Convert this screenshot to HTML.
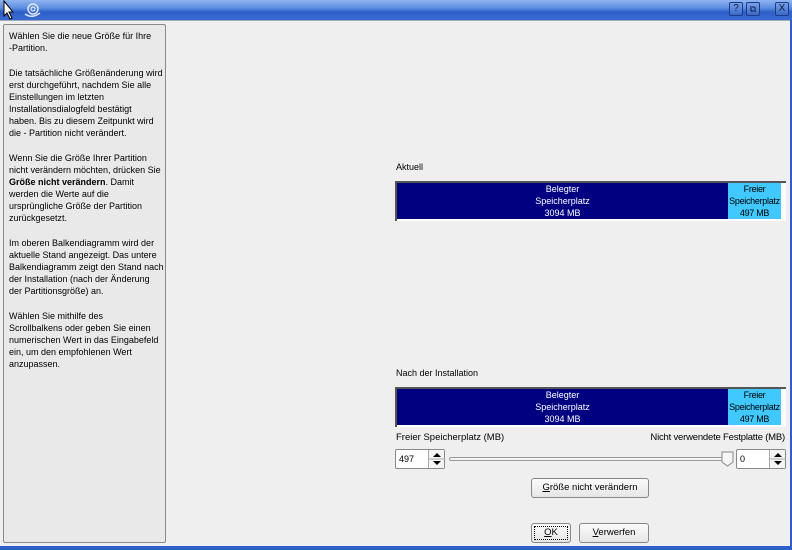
<!DOCTYPE html>
<html><head><meta charset="utf-8"><style>
*{margin:0;padding:0;box-sizing:border-box}
body{width:792px;height:550px;background:#efefef;font-family:"Liberation Sans","DejaVu Sans",sans-serif;font-size:9px;color:#000;position:relative;overflow:hidden;white-space:nowrap}
.title{position:absolute;left:0;top:0;width:792px;height:20px;background:linear-gradient(#8fb4f0 0%,#5b8de0 40%,#2e5fc8 60%,#3a6ad0 100%)}
.tb{position:absolute;top:2px;width:14px;height:14px;border:1px solid #1c3c8a;border-radius:2px;background:linear-gradient(#7aa2e8,#3a68c8);color:#0c1a40;font-size:10px;text-align:center;line-height:12px}
.abs{position:absolute}
.left{position:absolute;left:3px;top:24px;width:163px;height:519px;border:1px solid #8a8a8a;border-radius:2px;background:#e9e9e9;padding:5px 0 0 5px;line-height:12.1px}
.left p{margin-bottom:12.5px}
.bar{position:absolute;left:395px;width:391px;height:40px;border-top:2px solid #555;border-left:2px solid #555;background:#fff}
.dk{position:absolute;left:0;top:0;width:331px;height:36px;background:#000080;color:#fff;text-align:center;line-height:12px;padding-top:0}
.cy{position:absolute;left:331px;top:0;width:53px;height:36px;background:#40c8ff;color:#000;text-align:center;line-height:12px;letter-spacing:-0.3px}
.spin{position:absolute;top:449px;height:20px;border:1px solid #888;border-radius:2px;background:#fff}
.btn{position:absolute;border:1px solid #888;border-radius:3px;background:linear-gradient(#fafafa,#e6e6e6);text-align:center;font-size:9.5px}
.arr{position:absolute;right:0;top:0;width:16px;height:18px;border-left:1px solid #aaa;background:#f4f4f4}
</style></head><body>
<div class="title">
<svg class="abs" style="left:2px;top:0" width="14" height="20"><path d="M2 1 L2 16 L5 13 L8 19 L10 18 L7 12 L11 12 Z" fill="#fff" stroke="#000" stroke-width="1"/></svg>
<svg class="abs" style="left:22px;top:2px" width="20" height="18"><circle cx="11" cy="7" r="5" fill="none" stroke="#dde6f5" stroke-width="1.5"/><circle cx="11" cy="7" r="2" fill="none" stroke="#dde6f5" stroke-width="1.2"/><path d="M3 12 Q10 17 18 11" fill="none" stroke="#dde6f5" stroke-width="1.5"/></svg>
<div class="tb" style="left:729px">?</div>
<div class="tb" style="left:746px;font-size:9px">⧉</div>
<div class="tb" style="left:775px">X</div>
</div>
<div class="abs" style="left:0;top:20px;width:792px;height:1px;background:#9ab"></div>
<div class="left">
<p>Wählen Sie die neue Größe für Ihre<br>-Partition.</p>
<p>Die tatsächliche Größenänderung wird<br>erst durchgeführt, nachdem Sie alle<br>Einstellungen im letzten<br>Installationsdialogfeld bestätigt<br>haben. Bis zu diesem Zeitpunkt wird<br>die - Partition nicht verändert.</p>
<p>Wenn Sie die Größe Ihrer Partition<br>nicht verändern möchten, drücken Sie<br><b>Größe nicht verändern</b>. Damit<br>werden die Werte auf die<br>ursprüngliche Größe der Partition<br>zurückgesetzt.</p>
<p>Im oberen Balkendiagramm wird der<br>aktuelle Stand angezeigt. Das untere<br>Balkendiagramm zeigt den Stand nach<br>der Installation (nach der Änderung<br>der Partitionsgröße) an.</p>
<p>Wählen Sie mithilfe des<br>Scrollbalkens oder geben Sie einen<br>numerischen Wert in das Eingabefeld<br>ein, um den empfohlenen Wert<br>anzupassen.</p>
</div>
<div class="abs" style="left:396px;top:162px">Aktuell</div>
<div class="bar" style="top:181px"><div class="dk">Belegter<br>Speicherplatz<br>3094 MB</div><div class="cy">Freier<br>Speicherplatz<br>497 MB</div></div>
<div class="abs" style="left:396px;top:368px">Nach der Installation</div>
<div class="bar" style="top:387px"><div class="dk">Belegter<br>Speicherplatz<br>3094 MB</div><div class="cy">Freier<br>Speicherplatz<br>497 MB</div></div>
<div class="abs" style="left:396px;top:432px;font-size:9.5px">Freier Speicherplatz (MB)</div>
<div class="abs" style="right:7px;top:432px;font-size:9.5px;letter-spacing:-0.2px">Nicht verwendete Festplatte (MB)</div>
<div class="spin" style="left:395px;width:50px"><span class="abs" style="left:3px;top:4px">497</span><div class="arr"><svg width="16" height="18"><path d="M4 7 L8 3 L12 7Z M4 11 L12 11 L8 15Z" fill="#000"/><line x1="0" y1="9" x2="16" y2="9" stroke="#aaa"/></svg></div></div>
<div class="abs" style="left:449px;top:457px;width:282px;height:4px;border:1px solid #999;border-radius:2px;background:#f4f4f4"></div>
<svg class="abs" style="left:721px;top:451px" width="13" height="16"><path d="M1 1 H12 V11 L6.5 15 L1 11 Z" fill="#f6f6f6" stroke="#888"/></svg>
<div class="spin" style="left:736px;width:50px"><span class="abs" style="left:3px;top:4px">0</span><div class="arr"><svg width="16" height="18"><path d="M4 7 L8 3 L12 7Z M4 11 L12 11 L8 15Z" fill="#000"/><line x1="0" y1="9" x2="16" y2="9" stroke="#aaa"/></svg></div></div>
<div class="btn" style="left:531px;top:478px;width:118px;height:20px;line-height:18px"><u>G</u>röße nicht verändern</div>
<div class="btn" style="left:531px;top:523px;width:40px;height:20px;padding:2px"><div style="border:1px dotted #000;height:14px;line-height:12px"><u>O</u>K</div></div>
<div class="btn" style="left:579px;top:523px;width:70px;height:20px;line-height:18px"><u>V</u>erwerfen</div>
<div class="abs" style="left:0;top:546px;width:792px;height:4px;background:#2e5fc8"></div>
<div class="abs" style="left:790px;top:20px;width:2px;height:530px;background:#2e5fc8"></div>
</body></html>
